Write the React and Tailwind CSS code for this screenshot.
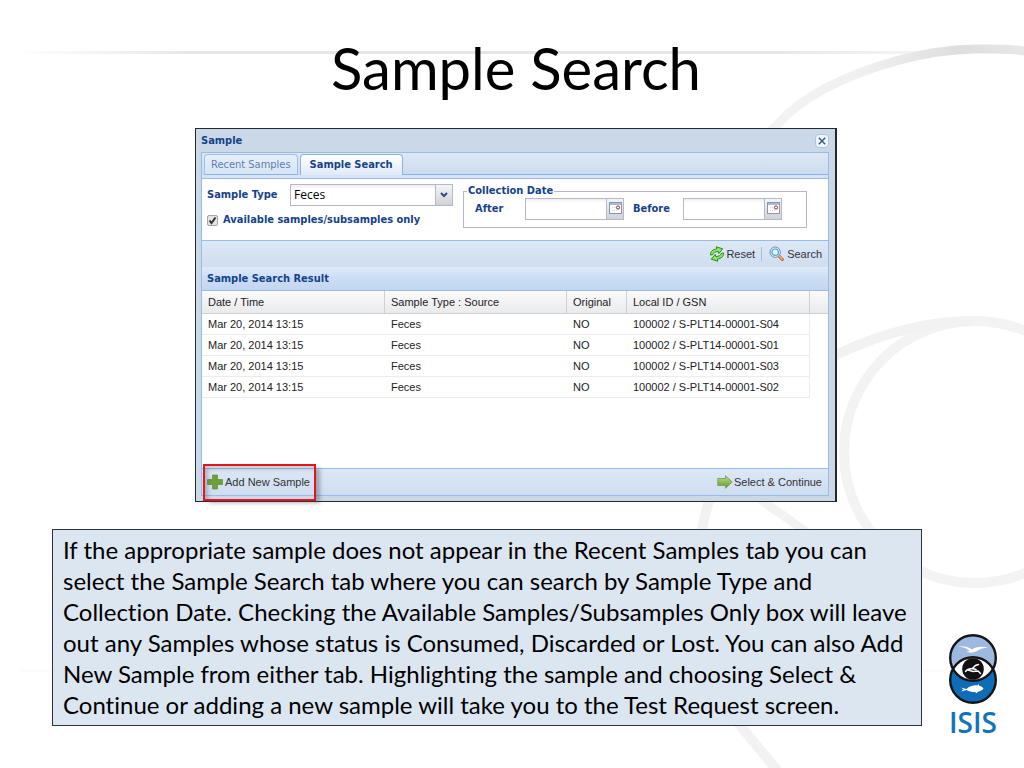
import React from "react";

const rows = ["S04", "S01", "S03", "S02"];
const TAHOMA = "font-['DejaVu_Sans_Condensed','DejaVu_Sans',sans-serif]";

function Backdrop() {
  return (
    <svg
      aria-hidden="true"
      className="absolute inset-0 -z-10 h-full w-full"
      viewBox="0 0 1024 768"
      preserveAspectRatio="xMaxYMin slice"
      fill="none"
    >
      <defs>
        <linearGradient id="fade" x1="0" x2="1">
          <stop offset="0" stopColor="#e6e6e6" stopOpacity="0" />
          <stop offset="0.2" stopColor="#e6e6e6" />
          <stop offset="0.8" stopColor="#e6e6e6" />
          <stop offset="1" stopColor="#e6e6e6" stopOpacity="0.3" />
        </linearGradient>
        <linearGradient id="rim" gradientUnits="userSpaceOnUse" x1="700" x2="1024" y1="0" y2="0">
          <stop offset="0" stopColor="#f5f5f5" />
          <stop offset="0.5" stopColor="#f0f0f0" />
          <stop offset="0.8" stopColor="#dedede" />
          <stop offset="1" stopColor="#e8e8e8" />
        </linearGradient>
      </defs>
      <rect x="10" y="51" width="940" height="3" fill="url(#fade)" />
      <rect x="20" y="669" width="930" height="3" fill="#fbfbfb" />
      <path d="M1040 54C1015 48 995 49 975 49C925 50 870 65 824 89C805 99 790 110 775 127C620 260 650 430 784 516L830 550" stroke="url(#rim)" strokeWidth="9" />
      <circle cx="975" cy="452" r="131" stroke="#f4f3f3" strokeWidth="10" />
      <path d="M975 321C925 321 880 334 838 354C770 390 725 440 705 515C685 600 700 670 742 728L782 776" stroke="#f3f2f2" strokeWidth="10" />
    </svg>
  );
}

function CalendarIcon() {
  return (
    <svg width="13" height="12" viewBox="0 0 13 12">
      <rect x="0.5" y="0.5" width="12" height="11" fill="#fff" stroke="#8a96ab" />
      <rect x="1" y="1" width="11" height="2" fill="#a9bddb" />
      <path d="M3 5.5h3M3 8.500h6" stroke="#e3cfcf" strokeDasharray="1 1" />
      <circle cx="9" cy="5.500" r="1.600" fill="#fff" stroke="#8d2f2f" />
    </svg>
  );
}

function DateField({ id, label }) {
  return (
    <>
      <label htmlFor={id} className="font-bold">{label}</label>
      <div className="flex h-[22px] w-[99px] border border-[#b5b8c8] bg-white">
        <input id={id} type="text" className="w-0 flex-1 bg-linear-to-b from-[#eeeeee] to-white to-20% px-1 text-black outline-none" />
        <button type="button" aria-label={`Pick ${label} date`} className="flex w-[17px] items-start justify-center border-l border-[#b5b8c8] bg-linear-to-b from-[#f4f5f7] to-[#cfd2d8] pt-[3px]">
          <CalendarIcon />
        </button>
      </div>
    </>
  );
}

function ResetIcon() {
  return (
    <svg width="16" height="16" viewBox="0 0 16 16" fill="#8fe65f" stroke="#2c8a1d" strokeWidth="0.9" strokeLinejoin="round">
      <g transform="rotate(-14 8 8)">
        <path d="M1.500 7.500C2 4 5 2.500 9 3V0.800L14.800 4.400 9.800 8V5.800C6.500 5.200 4.500 5.800 3.800 7.500Z" />
        <path d="M14.500 8.500C14 12 11 13.500 7 13V15.200L1.200 11.600 6.200 8V10.200C9.500 10.800 11.500 10.200 12.200 8.500Z" />
      </g>
    </svg>
  );
}

function SearchIcon() {
  return (
    <svg width="16" height="16" viewBox="0 0 16 16" fill="none">
      <path d="M10 10l3.300 3.500" stroke="#b9622c" strokeWidth="3" strokeLinecap="round" />
      <path d="M10.200 10l3 3.200" stroke="#f5b46e" strokeWidth="1.400" strokeLinecap="round" />
      <circle cx="6.200" cy="6.200" r="5.200" fill="#d9eefb" stroke="#6f8fb2" strokeWidth="1" />
      <circle cx="6.200" cy="6.200" r="3.200" fill="#eaf8ff" stroke="#4f9fd8" strokeWidth="1.200" />
    </svg>
  );
}

function ArrowIcon() {
  return (
    <svg width="16" height="14" viewBox="0 0 16 14">
      <defs>
        <linearGradient id="arrow" x1="0" x2="0" y1="0" y2="1">
          <stop offset="0" stopColor="#c3de8c" />
          <stop offset="1" stopColor="#5c9a23" />
        </linearGradient>
      </defs>
      <path d="M0.800 3.500H8.500V0.800L15.200 7 8.500 13.200V10.500H0.800Z" fill="url(#arrow)" stroke="#7c9c5c" strokeWidth="0.900" strokeLinejoin="round" />
    </svg>
  );
}

function PlusIcon() {
  return (
    <svg width="16" height="16" viewBox="0 0 16 16">
      <path d="M5.500 1h5v4.500H15.500v5H10.500V15h-5v-4.500H0.500v-5H5.500z" fill="#6f9f3c" stroke="#67943c" strokeWidth="0.800" strokeLinejoin="round" />
    </svg>
  );
}

function Logo() {
  return (
    <svg aria-hidden="true" width="50" height="70" viewBox="0 0 50 70">
      <defs>
        <clipPath id="upper"><circle cx="25" cy="24" r="22.500" /></clipPath>
      </defs>
      <circle cx="25" cy="24" r="22.800" fill="#9db9e0" />
      <circle cx="25" cy="46" r="22.800" fill="#0f6cb6" />
      <circle cx="25" cy="46" r="22.800" fill="#fff" clipPath="url(#upper)" />
      <circle cx="25" cy="35" r="10.800" fill="#111" />
      <circle cx="25" cy="24" r="22.800" fill="none" stroke="#151515" strokeWidth="2.400" />
      <circle cx="25" cy="46" r="22.800" fill="none" stroke="#151515" strokeWidth="2.400" />
      <path d="M10 12.500c5-.8 10 .2 14 3 4-2.500 8-3.500 16-2-5 .4-9 1.500-12 4l-4.500 1.300-5-.8 3-1.300c-3-2.500-6.500-3.700-11.500-4.200z" fill="#fff" />
      <path d="M17.500 37.500c2-2.500 4-3 7-3l3-3 3-1M20 36l5 1.500 5-.5 2.500 2.500M24 34.500l4 1" fill="none" stroke="#fff" strokeWidth="1.500" strokeLinecap="round" />
      <path d="M12.500 53.500l6 1.500c3-2.800 7-4 11-3.600l1-1.400.8 1.800c2 .6 3.200 1.200 4.200 2.700-1.200 1.700-3 2.700-5.500 3.200l-1.500 1.500-1.500-1.300c-3.500 0-6-.6-8.500-2l-5.500 1.600 2.500-2.200z" fill="#fff" />
    </svg>
  );
}

const toolButton = "flex items-center text-[#333]";

function SampleDialog() {
  return (
    <section aria-label="Sample" className="mx-auto w-full max-w-[642px] border border-r-2 border-[#222733] bg-[#cbd8e7] pr-[6px] pb-[5px] pl-[5px] text-[11px] leading-4 font-['Liberation_Sans',Arial,sans-serif]">
      <header className={`flex h-[23px] items-center justify-between text-[#15428b] ${TAHOMA}`}>
        <h2 className="font-bold">Sample</h2>
        <button type="button" aria-label="Close" className="flex size-[14px] items-center justify-center rounded-sm border border-[#a9c4ea] bg-[#f1f6fd]">
          <svg width="8" height="8" viewBox="0 0 8 8"><path d="M0.800 0.800l6.400 6.400M7.200 0.800L0.800 7.200" stroke="#33558f" strokeWidth="1.400" /></svg>
        </button>
      </header>

      <div className="border border-[#99bbe8] bg-white">
        <nav className={`flex h-[25px] items-end gap-[2px] border-b-3 border-[#d5e5f7] bg-linear-to-b from-[#dde8f5] to-[#cbdbef] px-[2px] ${TAHOMA}`}>
          <button type="button" className="h-[21px] rounded-t-sm border border-b-[#8db2e3] border-[#a0bfe8] bg-linear-to-b from-[#e6f0fc] to-[#d6e4f6] px-[6px] text-[#5f7fae]">Recent Samples</button>
          <button type="button" className="h-[21px] rounded-t-sm border border-b-0 border-[#8db2e3] bg-linear-to-b from-white to-[#dfeaf8] px-[9px] font-bold text-[#15428b]">Sample Search</button>
          <span aria-hidden="true" className="-ml-[2px] -mr-[2px] h-px flex-1 bg-[#8db2e3]" />
        </nav>

        <form className={`flex h-[62px] border-t border-[#99bbe8] pt-[5px] pr-[21px] pl-[5px] text-[#15428b] ${TAHOMA}`}>
          <div className="w-[256px]">
            <div className="flex items-center">
              <label htmlFor="type" className="w-[83px] font-bold">Sample Type</label>
              <div className="flex h-[22px] w-[163px] border border-[#b5b8c8]">
                <select id="type" className="w-0 flex-1 appearance-none bg-linear-to-b from-[#eeeeee] to-white to-20% px-[3px] font-['Open_Sans',sans-serif] text-[12px] text-black outline-none">
                  <option>Feces</option>
                </select>
                <span className="flex w-[17px] items-center justify-center border-l border-[#b5b8c8] bg-linear-to-b from-[#f4f5f7] to-[#cfd2d8]">
                  <svg width="8" height="6" viewBox="0 0 8 6"><path d="M1 1l3 3 3-3" fill="none" stroke="#2f4f82" strokeWidth="2" /></svg>
                </span>
              </div>
            </div>
            <label className="mt-[6px] flex items-center gap-[5px] font-bold">
              <span className="relative flex size-[11px]">
                <input type="checkbox" defaultChecked className="peer size-[11px] appearance-none rounded-xs border border-[#a3a6ac] bg-[#e3e4e6]" />
                <svg className="pointer-events-none absolute inset-0 opacity-0 peer-checked:opacity-100" width="11" height="11" viewBox="0 0 11 11"><path d="M2.500 5.500l2 2.500 4-5.500" fill="none" stroke="#333" strokeWidth="2" /></svg>
              </span>
              Available samples/subsamples only
            </label>
          </div>
          <fieldset className="h-[44px] flex-1 border border-[#b5b8c8] pl-[11px]">
            <legend className="-ml-2 px-px font-bold leading-[14px]">Collection Date</legend>
            <div className="grid grid-cols-[50px_108px_50px_99px] items-center">
              <DateField id="after" label="After" />
              <DateField id="before" label="Before" />
            </div>
          </fieldset>
        </form>

        <div className="flex h-[27px] items-center justify-end border-t border-[#99bbe8] bg-linear-to-b from-[#dce8f6] to-[#cfddef] pr-[6px]">
          <button type="button" className={`${toolButton} gap-px`}><ResetIcon />Reset</button>
          <span className="mr-[7px] ml-[6px] h-[14px] w-px bg-[#a5bfe0]" />
          <button type="button" className={`${toolButton} gap-[2px]`}><SearchIcon />Search</button>
        </div>

        <h3 className={`flex h-[24px] items-center border-b border-[#99bbe8] bg-linear-to-b from-[#e0eaf8] via-[#cddef4] via-45% to-[#c3d6f0] pl-[5px] font-bold text-[#15428b] ${TAHOMA}`}>
          Sample Search Result
        </h3>

        <div className="h-[177px]">
          <table className="w-full table-fixed border-separate border-spacing-0 text-left">
            <colgroup>
              <col className="w-[183px]" />
              <col className="w-[182px]" />
              <col className="w-[60px]" />
              <col className="w-[183px]" />
              <col />
            </colgroup>
            <thead>
              <tr className="h-[23px] bg-linear-to-b from-[#fafafa] to-[#e8eaec] text-[#222]">
                <th className="border-r border-b border-[#d0d0d0] pl-[6px] font-normal">Date / Time</th>
                <th className="border-r border-b border-[#d0d0d0] pl-[6px] font-normal">Sample Type : Source</th>
                <th className="border-r border-b border-[#d0d0d0] pl-[6px] font-normal">Original</th>
                <th className="border-r border-b border-[#d0d0d0] pl-[6px] font-normal">Local ID / GSN</th>
                <td className="border-b border-[#d0d0d0]" />
              </tr>
            </thead>
            <tbody>
              {rows.map((id) => (
                <tr key={id} className="h-[21px] text-[#222]">
                  <td className="border-b border-[#ececec] pl-[6px]">Mar 20, 2014 13:15</td>
                  <td className="border-b border-[#ececec] pl-[6px]">Feces</td>
                  <td className="border-b border-[#ececec] pl-[6px]">NO</td>
                  <td className="border-r border-b border-[#ececec] pl-[6px]">100002 / S-PLT14-00001-{id}</td>
                  <td />
                </tr>
              ))}
            </tbody>
          </table>
        </div>

        <footer className="relative flex h-[27px] items-center justify-between border-t border-[#99bbe8] bg-linear-to-b from-[#dce8f6] to-[#cfddef] pr-[6px] pl-[5px]">
          <button type="button" className={`${toolButton} gap-[2px]`}><PlusIcon />Add New Sample</button>
          <button type="button" className={`${toolButton} gap-px`}><ArrowIcon />Select &amp; Continue</button>
          <span aria-hidden="true" className="pointer-events-none absolute -top-[5px] left-px h-[37px] w-[113px] border-2 border-[#e8141c] shadow-[5px_3px_4px_-1px_rgba(60,70,90,0.4),inset_4px_4px_4px_-1px_rgba(60,70,90,0.3)]" />
        </footer>
      </div>
    </section>
  );
}

export default function App() {
  return (
    <main className="relative isolate min-h-screen overflow-hidden bg-white text-black">
      <Backdrop />
      <div className="pl-2">
        <h1 className="pt-8 pb-6 text-center text-[58px] leading-[72px] font-['Lato',sans-serif]">Sample Search</h1>
        <SampleDialog />
      </div>
      <div className="mt-[27px] flex items-end pl-[52px]">
        <p className="flex-1 border border-[#2b3440] bg-[#dce6f1] px-[10px] pt-[4px] pb-[5px] text-[24px] leading-[31px] [font-variant-ligatures:none] font-['Lato',sans-serif]">
          If the appropriate sample does not appear in the Recent Samples tab you can select the Sample Search tab where you can search by Sample Type and Collection Date. Checking the Available Samples/Subsamples Only box will leave out any Samples whose status is Consumed, Discarded or Lost. You can also Add New Sample from either tab. Highlighting the sample and choosing Select &amp; Continue or adding a new sample will take you to the Test Request screen.
        </p>
        <div className="-mb-[14px] flex w-[102px] flex-col items-center">
          <Logo />
          <span className="text-[28px] leading-9 font-semibold text-[#1173bc] font-['Open_Sans',sans-serif]">ISIS</span>
        </div>
      </div>
    </main>
  );
}
